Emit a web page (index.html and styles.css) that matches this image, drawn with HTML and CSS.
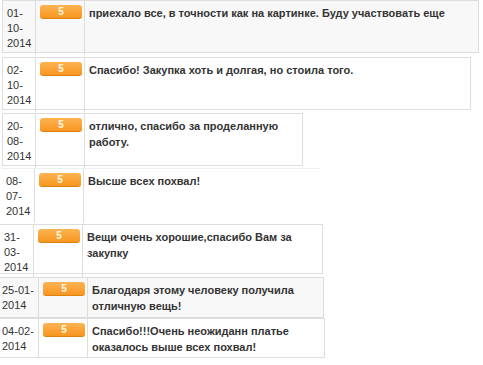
FILE: index.html
```html
<!DOCTYPE html>
<html lang="ru">
<head>
<meta charset="utf-8">
<title>Отзывы</title>
<link rel="stylesheet" href="styles.css">
</head>
<body>
<div class="list">
  <div class="review r1 shade">
    <div class="c date">01-10-2014</div>
    <div class="c mark"><span class="badge">5</span></div>
    <div class="c text">приехало все, в точности как на картинке. Буду участвовать еще</div>
  </div>
  <div class="review r2">
    <div class="c date">02-10-2014</div>
    <div class="c mark"><span class="badge">5</span></div>
    <div class="c text">Спасибо! Закупка хоть и долгая, но стоила того.</div>
  </div>
  <div class="review r3">
    <div class="c date">20-08-2014</div>
    <div class="c mark"><span class="badge">5</span></div>
    <div class="c text">отлично, спасибо за проделанную работу.</div>
  </div>
  <div class="review r4">
    <div class="c date">08-07-2014</div>
    <div class="c mark"><span class="badge">5</span></div>
    <div class="c text">Высше всех похвал!</div>
  </div>
  <div class="review r5">
    <div class="c date">31-03-2014</div>
    <div class="c mark"><span class="badge">5</span></div>
    <div class="c text">Вещи очень хорошие,спасибо Вам за закупку</div>
  </div>
  <div class="review r6 shade">
    <div class="c date">25-01-2014</div>
    <div class="c mark"><span class="badge">5</span></div>
    <div class="c text">Благодаря этому человеку получила отличную вещь!</div>
  </div>
  <div class="review r7">
    <div class="c date">04-02-2014</div>
    <div class="c mark"><span class="badge">5</span></div>
    <div class="c text">Спасибо!!!Очень неожиданн платье оказалось выше всех похвал!</div>
  </div>
</div>
</body>
</html>
```
FILE: styles.css
```css
html, body {
  margin: 0;
  padding: 0;
  background: #ffffff;
}

body {
  font-family: "Liberation Sans", Arial, sans-serif;
  color: #333333;
  overflow: hidden;
}

.list {
  display: flex;
  flex-direction: column;
  align-items: flex-start;
}

.review {
  display: grid;
  grid-template-columns: 33px 49px 1fr;
  border: 1px solid #dddddd;
  box-sizing: border-box;
  background: #ffffff;
}

.review.shade {
  background: #f8f8f8;
}

.c {
  border-right: 1px solid #dddddd;
  padding: 5px 4px 4px;
  line-height: 15px;
}

.c.text {
  border-right: 0;
  line-height: 16px;
  padding-top: 4px;
}

.date {
  font-size: 11px;
  color: #333333;
}

.mark {
  padding: 4px 0 0 4px;
}

.badge {
  display: block;
  width: 42px;
  height: 14px;
  box-sizing: border-box;
  border-radius: 3px;
  background: linear-gradient(#fdb452, #f7961f);
  border-bottom: 1px solid #dc830e;
  color: #fff8e8;
  font-size: 10px;
  font-weight: bold;
  line-height: 13px;
  text-align: center;
}

.text {
  font-size: 11px;
  font-weight: bold;
  color: #333333;
}

.r1 { width: 477px; margin-left: 2px; margin-top: 0; height: 53px; }
.r2 { width: 469px; margin-left: 2px; margin-top: 4px; height: 53px; }
.r3 { width: 301px; margin-left: 2px; margin-top: 3px; height: 53px; }
.r4 { width: 320px; margin-left: 1px; margin-top: 2px; height: 55px; border-top-color: #eeeeee; border-right-color: transparent; border-bottom-color: transparent; border-left-color: transparent; }
.r5 { width: 324px; margin-left: -1px; margin-top: 1px; height: 50px; }
.r6 { width: 327px; margin-left: -3px; margin-top: 3px; height: 41px; }
.r7 { width: 328px; margin-left: -3px; margin-top: 0; height: 40px; }

.r4 { grid-template-columns: 33px 49px 1fr; }
.r5 { grid-template-columns: 34px 49px 1fr; }
.r6, .r7 { grid-template-columns: 41px 49px 1fr; }
.r6 .date, .r7 .date { padding-left: 4px; }
```
